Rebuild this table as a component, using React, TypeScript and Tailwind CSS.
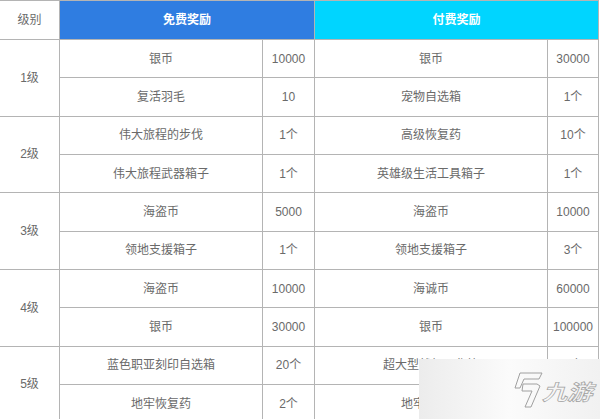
import React from 'react'

type Item = { name: string; qty: string }
type Level = { level: string; free: Item[]; paid: Item[] }

const LEVELS: Level[] = [
  {
    level: '1级',
    free: [
      { name: '银币', qty: '10000' },
      { name: '复活羽毛', qty: '10' },
    ],
    paid: [
      { name: '银币', qty: '30000' },
      { name: '宠物自选箱', qty: '1个' },
    ],
  },
  {
    level: '2级',
    free: [
      { name: '伟大旅程的步伐', qty: '1个' },
      { name: '伟大旅程武器箱子', qty: '1个' },
    ],
    paid: [
      { name: '高级恢复药', qty: '10个' },
      { name: '英雄级生活工具箱子', qty: '1个' },
    ],
  },
  {
    level: '3级',
    free: [
      { name: '海盗币', qty: '5000' },
      { name: '领地支援箱子', qty: '1个' },
    ],
    paid: [
      { name: '海盗币', qty: '10000' },
      { name: '领地支援箱子', qty: '3个' },
    ],
  },
  {
    level: '4级',
    free: [
      { name: '海盗币', qty: '10000' },
      { name: '银币', qty: '30000' },
    ],
    paid: [
      { name: '海诚币', qty: '60000' },
      { name: '银币', qty: '100000' },
    ],
  },
  {
    level: '5级',
    free: [
      { name: '蓝色职亚刻印自选箱', qty: '20个' },
      { name: '地牢恢复药', qty: '2个' },
    ],
    paid: [
      { name: '超大型战舰强化箱', qty: '1个' },
      { name: '地牢恢复药', qty: '5个' },
    ],
  },
]

const cell = 'border border-[#b4b4b4] text-center align-middle p-0'

// 九游 watermark in the bottom right corner
function Watermark() {
  return (
    <div className="absolute left-[419px] top-[359px] w-[181px] h-[60px] bg-gradient-to-r from-[#ececec] via-[#fbfbfb] to-[#f1f1f1]">
      <svg
        className="absolute left-[92px] top-[13px]"
        width="32"
        height="37"
        viewBox="0 0 32 37"
        fill="none"
        stroke="#a0a0a0"
        strokeWidth="1"
        strokeLinejoin="round"
      >
        <path d="M9 1 L31 1 L28 7 L13 7 L9 16 L4 16 Z" />
        <path d="M12 12 L26 12 L29 14 L20 35 L14 35 L21 19 L11 19 Z" />
      </svg>
      <span className="absolute left-[126px] top-[20px] text-[25px] leading-none font-bold text-transparent [-webkit-text-stroke:0.8px_#a0a0a0] tracking-[0px] [font-family:'Noto_Sans_CJK_SC',sans-serif] [transform:skewX(-18deg)_scaleY(0.85)]">
        九游
      </span>
    </div>
  )
}

export default function App() {
  return (
    <div className="relative w-[600px] h-[419px] overflow-hidden bg-white [font-family:'Liberation_Sans','Noto_Sans_CJK_SC',sans-serif] text-[12px] text-[#6a6a6a]">
      <table className="border-collapse table-fixed w-[599px] -ml-px">
        <colgroup>
          <col className="w-[60px]" />
          <col className="w-[203px]" />
          <col className="w-[52px]" />
          <col className="w-[233px]" />
          <col className="w-[51px]" />
        </colgroup>
        <thead>
          <tr className="h-[39px]">
            <th className={`${cell} font-normal`}>级别</th>
            <th colSpan={2} className={`${cell} bg-[#2f7de1] text-white font-bold`}>
              免费奖励
            </th>
            <th colSpan={2} className={`${cell} bg-[#00d5ff] text-white font-bold`}>
              付费奖励
            </th>
          </tr>
        </thead>
        <tbody>
          {LEVELS.map((lv) =>
            lv.free.map((f, i) => (
              <tr key={lv.level + i} className="h-[38.33px]">
                {i === 0 && (
                  <td rowSpan={2} className={cell}>
                    {lv.level}
                  </td>
                )}
                <td className={cell}>{f.name}</td>
                <td className={cell}>{f.qty}</td>
                <td className={cell}>{lv.paid[i].name}</td>
                <td className={cell}>{lv.paid[i].qty}</td>
              </tr>
            )),
          )}
        </tbody>
      </table>
      <Watermark />
    </div>
  )
}
